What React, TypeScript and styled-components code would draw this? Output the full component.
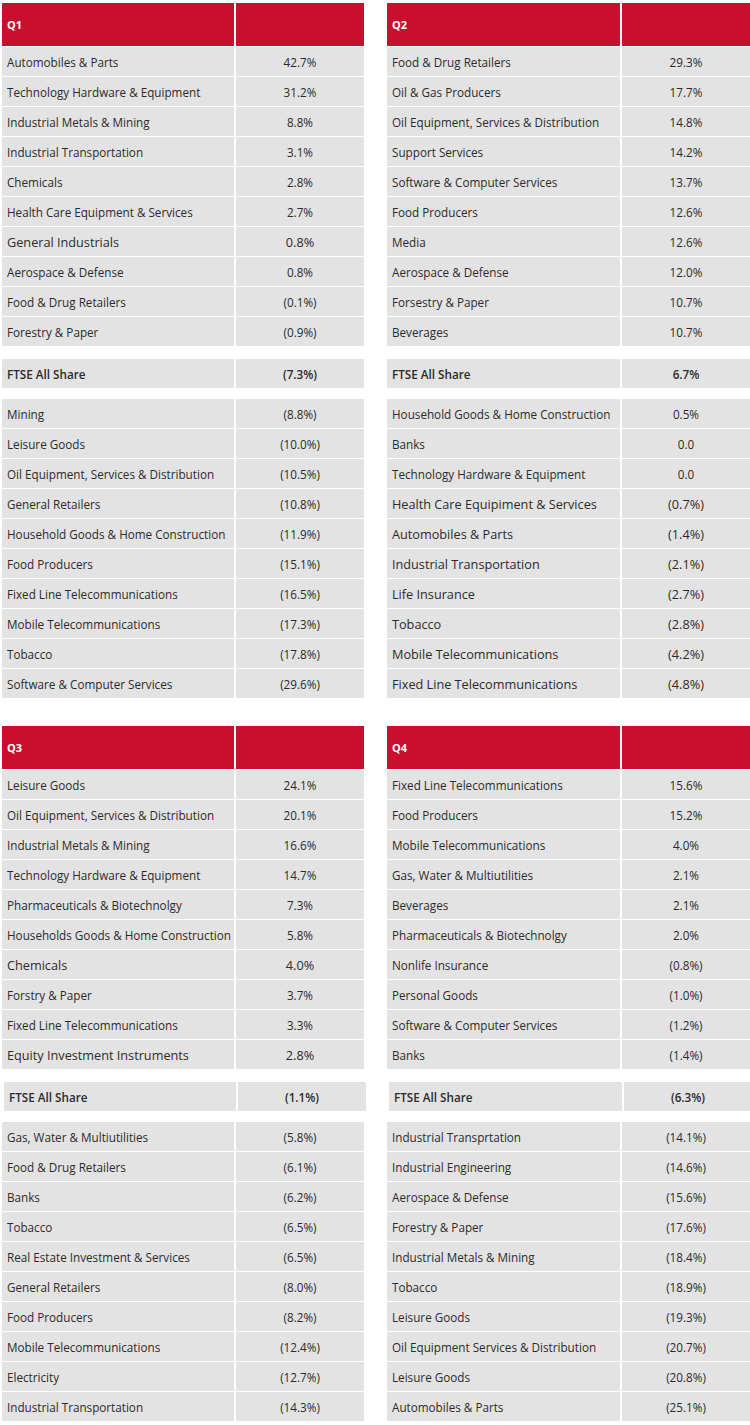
import styled, { createGlobalStyle } from 'styled-components';

const GlobalStyle = createGlobalStyle`
  html, body { margin: 0; padding: 0; background: #ffffff; }
  body { font-family: 'Open Sans', 'Liberation Sans', sans-serif; color: #2b2b2b; }
`;

type Row = [string, string, boolean?];

type Quarter = {
  title: string;
  top: Row[];
  index: string;
  bottom: Row[];
  shiftIndex?: boolean;
};

const quarters: Quarter[] = [
  {
    title: 'Q1',
    top: [
      ['Automobiles & Parts', '42.7%'],
      ['Technology Hardware & Equipment', '31.2%'],
      ['Industrial Metals & Mining', '8.8%'],
      ['Industrial Transportation', '3.1%'],
      ['Chemicals', '2.8%'],
      ['Health Care Equipment & Services', '2.7%'],
      ['General Industrials', '0.8%', true],
      ['Aerospace & Defense', '0.8%'],
      ['Food & Drug Retailers', '(0.1%)'],
      ['Forestry & Paper', '(0.9%)'],
    ],
    index: '(7.3%)',
    bottom: [
      ['Mining', '(8.8%)'],
      ['Leisure Goods', '(10.0%)'],
      ['Oil Equipment, Services & Distribution', '(10.5%)'],
      ['General Retailers', '(10.8%)'],
      ['Household Goods & Home Construction', '(11.9%)'],
      ['Food Producers', '(15.1%)'],
      ['Fixed Line Telecommunications', '(16.5%)'],
      ['Mobile Telecommunications', '(17.3%)'],
      ['Tobacco', '(17.8%)'],
      ['Software & Computer Services', '(29.6%)'],
    ],
  },
  {
    title: 'Q2',
    top: [
      ['Food & Drug Retailers', '29.3%'],
      ['Oil & Gas Producers', '17.7%'],
      ['Oil Equipment, Services & Distribution', '14.8%'],
      ['Support Services', '14.2%'],
      ['Software & Computer Services', '13.7%'],
      ['Food Producers', '12.6%'],
      ['Media', '12.6%'],
      ['Aerospace & Defense', '12.0%'],
      ['Forsestry & Paper', '10.7%'],
      ['Beverages', '10.7%'],
    ],
    index: '6.7%',
    bottom: [
      ['Household Goods & Home Construction', '0.5%'],
      ['Banks', '0.0'],
      ['Technology Hardware & Equipment', '0.0'],
      ['Health Care Equipiment & Services', '(0.7%)', true],
      ['Automobiles & Parts', '(1.4%)', true],
      ['Industrial Transportation', '(2.1%)', true],
      ['Life Insurance', '(2.7%)', true],
      ['Tobacco', '(2.8%)', true],
      ['Mobile Telecommunications', '(4.2%)', true],
      ['Fixed Line Telecommunications', '(4.8%)', true],
    ],
  },
  {
    title: 'Q3',
    top: [
      ['Leisure Goods', '24.1%'],
      ['Oil Equipment, Services & Distribution', '20.1%'],
      ['Industrial Metals & Mining', '16.6%'],
      ['Technology Hardware & Equipment', '14.7%'],
      ['Pharmaceuticals & Biotechnolgy', '7.3%'],
      ['Households Goods & Home Construction', '5.8%'],
      ['Chemicals', '4.0%', true],
      ['Forstry & Paper', '3.7%'],
      ['Fixed Line Telecommunications', '3.3%'],
      ['Equity Investment Instruments', '2.8%', true],
    ],
    index: '(1.1%)',
    shiftIndex: true,
    bottom: [
      ['Gas, Water & Multiutilities', '(5.8%)'],
      ['Food & Drug Retailers', '(6.1%)'],
      ['Banks', '(6.2%)'],
      ['Tobacco', '(6.5%)'],
      ['Real Estate Investment & Services', '(6.5%)'],
      ['General Retailers', '(8.0%)'],
      ['Food Producers', '(8.2%)'],
      ['Mobile Telecommunications', '(12.4%)'],
      ['Electricity', '(12.7%)'],
      ['Industrial Transportation', '(14.3%)'],
    ],
  },
  {
    title: 'Q4',
    top: [
      ['Fixed Line Telecommunications', '15.6%'],
      ['Food Producers', '15.2%'],
      ['Mobile Telecommunications', '4.0%'],
      ['Gas, Water & Multiutilities', '2.1%'],
      ['Beverages', '2.1%'],
      ['Pharmaceuticals & Biotechnolgy', '2.0%'],
      ['Nonlife Insurance', '(0.8%)'],
      ['Personal Goods', '(1.0%)'],
      ['Software & Computer Services', '(1.2%)'],
      ['Banks', '(1.4%)'],
    ],
    index: '(6.3%)',
    shiftIndex: true,
    bottom: [
      ['Industrial Transprtation', '(14.1%)'],
      ['Industrial Engineering', '(14.6%)'],
      ['Aerospace & Defense', '(15.6%)'],
      ['Forestry & Paper', '(17.6%)'],
      ['Industrial Metals & Mining', '(18.4%)'],
      ['Tobacco', '(18.9%)'],
      ['Leisure Goods', '(19.3%)'],
      ['Oil Equipment Services & Distribution', '(20.7%)'],
      ['Leisure Goods', '(20.8%)'],
      ['Automobiles & Parts', '(25.1%)'],
    ],
  },
];

const Page = styled.div`
  display: grid;
  grid-template-columns: 362px 363px;
  column-gap: 23px;
  row-gap: 28px;
  padding: 3px 0 0 2px;
`;

const Table = styled.section`
  display: flex;
  flex-direction: column;
`;

const Line = styled.div<{ $shift?: boolean }>`
  display: grid;
  grid-template-columns: 1fr 2px 128px;
  margin-left: ${p => (p.$shift ? '2px' : '0')};
  margin-right: ${p => (p.$shift ? '-2px' : '0')};
`;

const HeadCell = styled.div`
  height: 43px;
  background: #c8102e;
  color: #ffffff;
  font-size: 11px;
  font-weight: 700;
  display: flex;
  align-items: center;
  padding-left: 5px;
`;

const Divider = styled.div`
  background: #ffffff;
`;

const Group = styled.div<{ $top: number }>`
  display: flex;
  flex-direction: column;
  gap: 1px;
  margin-top: ${p => p.$top}px;
`;

const Cell = styled.div<{ $big?: boolean; $bold?: boolean }>`
  height: 29px;
  background: #e3e3e3;
  display: flex;
  align-items: center;
  font-size: ${p => (p.$big ? '12.7px' : '11.7px')};
  font-weight: ${p => (p.$bold ? 600 : 400)};
  white-space: nowrap;
`;

const Label = styled(Cell)`
  padding-left: 5px;
`;

const Value = styled(Cell)`
  justify-content: center;
`;

const DataRows = ({ rows, top }: { rows: Row[]; top: number }) => (
  <Group $top={top}>
    {rows.map(([name, val, big], i) => (
      <Line key={i}>
        <Label $big={big}>{name}</Label>
        <Divider />
        <Value $big={big}>{val}</Value>
      </Line>
    ))}
  </Group>
);

export default function App() {
  return (
    <>
      <GlobalStyle />
      <Page>
        {quarters.map(q => (
          <Table key={q.title}>
            <Line>
              <HeadCell>{q.title}</HeadCell>
              <Divider />
              <HeadCell />
            </Line>
            <DataRows rows={q.top} top={1} />
            <Group $top={13}>
              <Line $shift={q.shiftIndex}>
                <Label $bold>FTSE All Share</Label>
                <Divider />
                <Value $bold>{q.index}</Value>
              </Line>
            </Group>
            <DataRows rows={q.bottom} top={11} />
          </Table>
        ))}
      </Page>
    </>
  );
}
